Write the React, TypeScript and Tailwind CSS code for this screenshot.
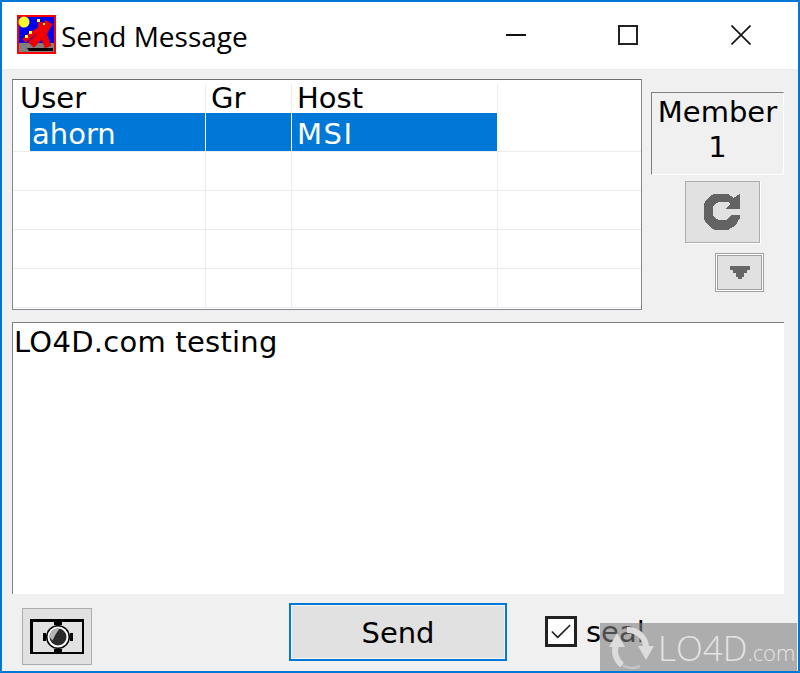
import { Check } from "lucide-react";

const rows = [0, 1, 2, 3];

function AppIcon() {
  return (
    <svg width="39" height="39" viewBox="0 0 39 39" className="shrink-0">
      <rect width="39" height="39" fill="#ff0000" />
      <rect x="2" y="2" width="35" height="35" fill="#0000f0" />
      <rect x="2" y="28" width="35" height="9" fill="#808080" />
      <circle cx="7" cy="7" r="5.5" fill="#ffff30" />
      <path d="M10 33h26v3H12z" fill="#000" />
      <g fill="none" stroke="#f00000" strokeLinejoin="round">
        <path d="M32 7L26 18L14 30" strokeWidth="8" />
        <path d="M26 18L31 32" strokeWidth="7" />
        <path d="M7 26L15 19L23 14L24 7" strokeWidth="5" />
      </g>
      <path d="M20 4h3v3h-3zM26 8h2v2h-2zM12 16h3v3h-3zM8 20h3v3H8z" fill="#ffff30" />
    </svg>
  );
}

function MemberList() {
  return (
    <div className="w-[630px] h-[231px] bg-white border border-[#828790] border-t-[#6d6d6d] pt-[1px] text-[29px] leading-none text-black overflow-hidden">
      <div className="flex h-[32px] pt-[3px]">
        <div className="w-[193px] h-full border-r border-[#ececec] pl-[7px] flex items-center">User</div>
        <div className="w-[86px] h-full border-r border-[#ececec] pl-[5px] flex items-center">Gr</div>
        <div className="w-[206px] h-full border-r border-[#ececec] pl-[5px] flex items-center">Host</div>
      </div>
      <div className="flex h-[39px] border-b border-[#ececec]">
        <div className="w-[17px] h-full" />
        <div className="w-[175px] h-full bg-[#0078d7] text-white pl-[2px] pt-[5px] flex items-center">ahorn</div>
        <div className="w-px h-full bg-white/80" />
        <div className="w-[85px] h-full bg-[#0078d7]" />
        <div className="w-px h-full bg-white/80" />
        <div className="w-[205px] h-full bg-[#0078d7] text-white pl-[5px] pt-[5px] tracking-[1.5px] flex items-center">MSI</div>
        <div className="flex-1" />
      </div>
      {rows.map((r) => (
        <div key={r} className="flex h-[39px] border-b border-[#ececec]">
          <div className="w-[193px] h-full border-r border-[#ececec]" />
          <div className="w-[86px] h-full border-r border-[#ececec]" />
          <div className="w-[206px] h-full border-r border-[#ececec]" />
        </div>
      ))}
    </div>
  );
}

function RefreshGlyph() {
  return (
    <svg width="37" height="37" viewBox="0 0 37 37" shapeRendering="crispEdges">
      <path
        d="M10 0H24L27 2 29 4 36 0V15H21L26 10 24 8H15L11 10 9 13V21L11 24 15 26H22L25 24 27 21H36V24L33 29 29 33 24 36H11L6 33 3 30 0 25V10L3 5 6 2Z"
        fill="#636363"
      />
    </svg>
  );
}

function CameraGlyph() {
  return (
    <div className="w-[54px] h-[35px] bg-[#e1e1e1] border-[3px] border-black border-r-2 border-b-2 flex items-center justify-center">
      <svg width="30" height="30" viewBox="0 0 30 30" className="-my-2 shrink-0">
        <path d="M11 0h8v3h-8zM11 27h8v3h-8zM0 11h3v8H0zM27 11h3v8h-3z" fill="#000" />
        <circle cx="15" cy="15" r="12" fill="#000" />
        <circle cx="15" cy="15" r="10.5" fill="#fff" />
        <circle cx="15" cy="15" r="8.5" fill="#2b2b2b" />
        <path d="M6.5 15a8.5 8.5 0 0 1 10-8.4l-4 6-3 6z" fill="#b4b4b4" />
      </svg>
    </div>
  );
}

function Watermark() {
  return (
    <div className="absolute left-[598px] top-[621px] w-[197px] h-[48px] bg-[#808080]/60 flex items-center pl-[7px] text-[#e4e4e4] font-['Open_Sans',sans-serif] font-light">
      <svg width="48" height="44" viewBox="0 0 48 44" fill="none" className="mt-[4px] shrink-0">
        <path d="M20 3a18 18 0 0 1 19 17" stroke="#dcdcdc" strokeWidth="6" />
        <path d="M31 19h16l-8 14z" fill="#dcdcdc" />
        <path d="M9 18a18 18 0 0 0 6 20" stroke="#dcdcdc" strokeWidth="6" />
        <path d="M15 38a18 18 0 0 0 18 1" stroke="#c8c8c8" strokeWidth="2" />
        <path d="M10 6l8 14H2z" fill="#dcdcdc" />
      </svg>
      <span className="ml-[3px] text-[35px] leading-none">LO4D</span>
      <span className="text-[22px] leading-none mt-[9px]">.com</span>
    </div>
  );
}

export default function App() {
  return (
    <div className="relative w-[800px] h-[673px] border-2 border-[#0078d7] bg-[#f0f0f0] font-['DejaVu_Sans',sans-serif] overflow-hidden">
      <div className="h-[68px] bg-white flex items-center pl-[15px] border-b border-[#eaeaea]">
        <div className="-mt-[3px] flex items-center flex-1">
          <AppIcon />
          <span className="ml-[5px] pt-[4px] text-[28px] leading-none text-black font-['Open_Sans',sans-serif]">Send Message</span>
        </div>
        <div className="flex items-center text-black -mt-[1px] pr-[1px]">
          <div className="w-[110px] flex justify-center">
            <div className="w-[20px] h-[2px] bg-[#111]" />
          </div>
          <div className="w-[114px] flex justify-center">
            <div className="w-[20px] h-[20px] border-2 border-[#222]" />
          </div>
          <div className="w-[112px] flex justify-center">
            <svg width="20" height="20" viewBox="0 0 20 20">
              <path d="M0.5 0.5L19.5 19.5M19.5 0.5L0.5 19.5" stroke="#111" strokeWidth="1.6" />
            </svg>
          </div>
        </div>
      </div>

      <div className="flex pl-[10px] pt-[9px]">
        <MemberList />
        <div className="ml-[9px] pt-[13px] w-[133px] flex flex-col">
          <div className="h-[83px] pb-[8px] border border-t-[#7f7f7f] border-l-[#7f7f7f] border-r-white border-b-white flex flex-col items-center justify-center text-[29px] leading-[35px] text-black">
            <span>Member</span>
            <span>1</span>
          </div>
          <div className="ml-[34px] mt-[6px] w-[75px] h-[62px] bg-[#e1e1e1] border border-[#adadad] shadow-[1px_1px_0_#fff] flex items-center justify-center">
            <RefreshGlyph />
          </div>
          <div className="ml-[64px] mt-[10px] w-[49px] h-[39px] bg-[#e1e1e1] border border-[#a0a0a0] shadow-[inset_0_0_0_1px_#fff,inset_0_0_0_2px_#a0a0a0] flex items-center justify-center">
            <svg width="20" height="14" viewBox="0 0 20 14" shapeRendering="crispEdges">
              <path d="M0 0h20v4h-3v3h-3v4h-2v2H8v-2H6V7H3V4H0z" fill="#666" />
            </svg>
          </div>
        </div>
      </div>

      <div className="ml-[10px] mt-[12px] w-[772px] h-[272px] bg-white border-t border-l border-t-[#7f7f7f] border-l-[#7f7f7f] text-[29px] leading-none tracking-[0.25px] text-black pl-[1px] pt-[5px]">
        LO4D.com testing
      </div>

      <div className="flex items-start pl-[20px]">
        <div className="mt-[14px] w-[70px] h-[57px] bg-[#e1e1e1] border border-[#adadad] flex items-center justify-center">
          <CameraGlyph />
        </div>
        <div className="ml-[197px] mt-[9px] w-[218px] h-[58px] pt-[2px] bg-[#e1e1e1] border-2 border-[#0078d7] shadow-[inset_0_0_0_1px_#f5f5f5] flex items-center justify-center text-[29px] leading-none text-black">
          Send
        </div>
        <div className="ml-[38px] mt-[22px] w-[32px] h-[31px] bg-white border-[3px] border-[#222] flex items-center justify-center">
          <Check size={26} strokeWidth={1.7} absoluteStrokeWidth className="text-[#222]" />
        </div>
        <span className="ml-[9px] mt-[22px] text-[29px] leading-[32px] text-black">seal</span>
      </div>

      <Watermark />
    </div>
  );
}
